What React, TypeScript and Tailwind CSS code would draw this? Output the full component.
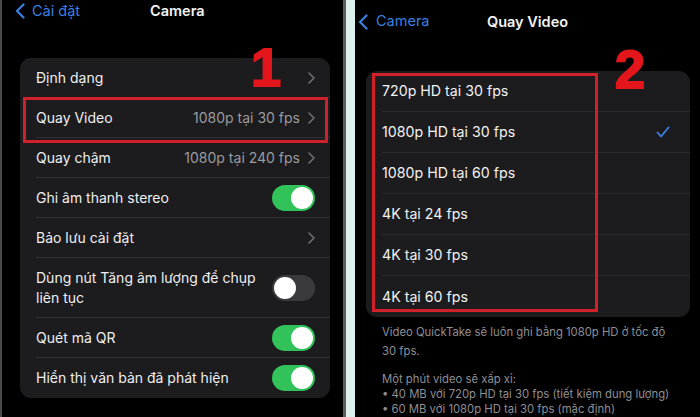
import React from "react";

const font = { fontFamily: "Inter, 'Noto Sans', 'Liberation Sans', sans-serif" };

function Chevron() {
  return (
    <svg width="7" height="12" viewBox="0 0 7 12" className="shrink-0">
      <polyline points="1,1 6,6 1,11" fill="none" stroke="#6e6e73" strokeWidth="1.6" strokeLinecap="round" strokeLinejoin="round" />
    </svg>
  );
}

function BackChevron() {
  return (
    <svg width="10" height="16" viewBox="0 0 10 16" className="shrink-0">
      <polyline points="8.5,1.5 2,8 8.5,14.5" fill="none" stroke="#3b7fe0" strokeWidth="2.2" strokeLinecap="round" strokeLinejoin="round" />
    </svg>
  );
}

function Toggle({ on }: { on: boolean }) {
  return on ? (
    <div className="w-[43px] h-[26px] rounded-full bg-[#32c25a] flex items-center justify-end px-[2px] shrink-0">
      <div className="w-[22px] h-[22px] rounded-full bg-white" />
    </div>
  ) : (
    <div className="w-[43px] h-[26px] rounded-full bg-[#3a3a3c] flex items-center justify-start px-[2px] shrink-0">
      <div className="w-[22px] h-[22px] rounded-full bg-white" />
    </div>
  );
}

type Row = {
  label: React.ReactNode;
  value?: string;
  chevron?: boolean;
  toggle?: boolean;
  tall?: boolean;
};

const leftRows: Row[] = [
  { label: "Định dạng", chevron: true },
  { label: "Quay Video", value: "1080p tại 30 fps", chevron: true },
  { label: "Quay chậm", value: "1080p tại 240 fps", chevron: true },
  { label: "Ghi âm thanh stereo", toggle: true },
  { label: "Bảo lưu cài đặt", chevron: true },
  {
    label: (
      <>
        Dùng nút Tăng âm lượng để chụp
        <br />
        liên tục
      </>
    ),
    toggle: false,
    tall: true,
  },
  { label: "Quét mã QR", toggle: true },
  { label: "Hiển thị văn bản đã phát hiện", toggle: true },
];

const rightRows = [
  "720p HD tại 30 fps",
  "1080p HD tại 30 fps",
  "1080p HD tại 60 fps",
  "4K tại 24 fps",
  "4K tại 30 fps",
  "4K tại 60 fps",
];

export default function App() {
  return (
    <div className="w-[700px] h-[417px] flex overflow-hidden bg-black" style={font}>
      {/* Left panel */}
      <div className="w-[346px] h-full bg-black border-l-2 border-l-[#4a4a46] border-r-[3px] border-r-[#5c5c5c] flex flex-col relative">
        <div className="h-[22px] relative flex items-center">
          <div className="flex items-center gap-[7px] pl-[13px]">
            <BackChevron />
            <span className="text-[14.5px] text-[#3b7fe0] leading-none">Cài đặt</span>
          </div>
          <div className="absolute left-[148px] top-0 h-[22px] flex items-center text-[14.5px] font-semibold text-[#f2f2f2]">
            Camera
          </div>
        </div>

        <div className="mt-[36px] ml-[18px] mr-[13px] rounded-[11px] bg-[#1c1c1e] relative">
          {leftRows.map((r, i) => (
            <div key={i} className={`flex pl-[16px] ${r.tall ? "h-[60px]" : "h-[40px]"}`}>
              <div
                className={`flex-1 flex items-center justify-between pr-[15px] ${
                  i < leftRows.length - 1 ? "border-b border-[#323234]" : ""
                }`}
              >
                <span className="text-[14px] text-[#efefef] leading-[20px]">{r.label}</span>
                <div className="flex items-center gap-[8px]">
                  {r.value && <span className="text-[14px] text-[#9a9a9f]">{r.value}</span>}
                  {r.chevron && <Chevron />}
                  {r.toggle !== undefined && <Toggle on={r.toggle} />}
                </div>
              </div>
            </div>
          ))}
          <div className="absolute left-[3px] right-[2px] top-[39px] h-[46px] border-[3px] border-[#d0202a] pointer-events-none" />
        </div>

        <div
          className="absolute left-[249px] top-[40px] text-[54px] font-bold leading-none text-[#e3161b] [-webkit-text-stroke:2px_#e3161b]"
          style={{ fontFamily: "'Liberation Sans', Arial, sans-serif" }}
        >
          1
        </div>
      </div>

      {/* Divider strip */}
      <div className="w-[9px] h-full bg-[#dcf1ee]" />

      {/* Right panel */}
      <div className="flex-1 h-full bg-black flex flex-col relative">
        <div className="mt-[11px] h-[22px] relative flex items-center">
          <div className="flex items-center gap-[8px] pl-[3px]">
            <BackChevron />
            <span className="text-[14.5px] text-[#3b7fe0] leading-none">Camera</span>
          </div>
          <div className="absolute left-0 right-0 top-0 h-[22px] flex items-center justify-center text-[14.5px] font-semibold text-[#f2f2f2]">
            Quay Video
          </div>
        </div>

        <div className="mt-[39px] ml-[11px] mr-[10px] rounded-[11px] bg-[#1c1c1e] relative">
          {rightRows.map((r, i) => (
            <div key={i} className="flex pl-[16px] h-[41px]">
              <div
                className={`flex-1 flex items-center justify-between pr-[20px] ${
                  i < rightRows.length - 1 ? "border-b border-[#2a2a2c]" : ""
                }`}
              >
                <span className="text-[14.2px] text-[#f2f2f2]">{r}</span>
                {i === 1 && (
                  <svg width="14" height="12" viewBox="0 0 14 12">
                    <polyline points="1.5,6.5 5,10.5 12.5,1.5" fill="none" stroke="#3a82e8" strokeWidth="1.8" strokeLinecap="round" strokeLinejoin="round" />
                  </svg>
                )}
              </div>
            </div>
          ))}
          <div className="absolute left-[6px] top-[2px] w-[226px] h-[239px] border-[3px] border-[#d0202a] pointer-events-none" />
        </div>

        <div className="pl-[27px] pr-[10px] mt-[6px] text-[11.3px] text-[#8e8e93]">
          <p className="leading-[19px]">
            Video QuickTake sẽ luôn ghi bằng 1080p HD ở tốc độ
            <br />
            30 fps.
          </p>
          <p className="leading-[15px] mt-[11px]">
            Một phút video sẽ xấp xỉ:
            <br />• 40 MB với 720p HD tại 30 fps (tiết kiệm dung lượng)
            <br />• 60 MB với 1080p HD tại 30 fps (mặc định)
          </p>
        </div>

        <div
          className="absolute left-[260px] top-[42px] text-[54px] font-bold leading-none text-[#e3161b] [-webkit-text-stroke:2px_#e3161b]"
          style={{ fontFamily: "'Liberation Sans', Arial, sans-serif" }}
        >
          2
        </div>
      </div>
    </div>
  );
}
